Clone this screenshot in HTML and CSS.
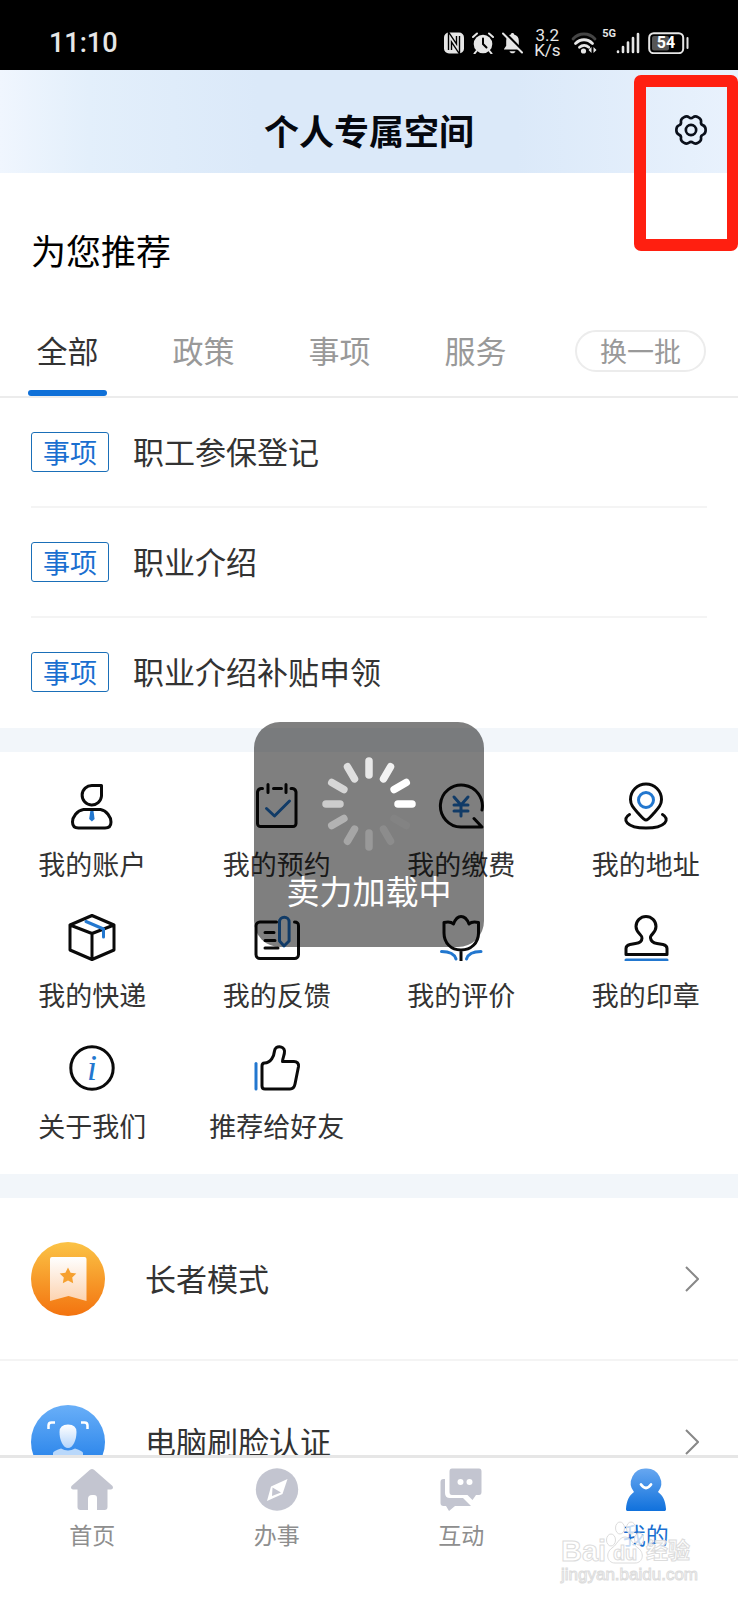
FILE: index.html
```html
<!DOCTYPE html>
<html lang="zh-CN">
<head>
<meta charset="utf-8">
<meta name="viewport" content="width=device-width, initial-scale=1">
<title>个人专属空间</title>
<link rel="stylesheet" href="styles.css">
</head>
<body>
<div class="app">
  <div class="status">
    <span class="status-time">11:10</span>
    <div class="status-icons">
      <svg width="20" height="22" viewBox="0 0 20 22"><rect width="20" height="21" y=".5" rx="5" fill="#e6e6e6"/><path d="M6 18V5l8 12V4" fill="none" stroke="#000" stroke-width="4.4"/><path d="M6 18V5l8 12V4" fill="none" stroke="#e6e6e6" stroke-width="1.6"/></svg>
      <svg width="22" height="22" viewBox="0 0 22 22"><circle cx="11" cy="12" r="9.3" fill="#e6e6e6"/><path d="M1 5l4-3.500M21 5l-4-3.500M4.500 19l-2 2.500M17.500 19l2 2.500" stroke="#e6e6e6" stroke-width="2" stroke-linecap="round"/><path d="M11 6.500V12l3.500 3.500" fill="none" stroke="#000" stroke-width="2" stroke-linecap="round"/></svg>
      <svg width="21" height="22" viewBox="0 0 21 22"><path d="M10.500 1c1 0 1.600.6 1.600 1.500 3.200.8 4.700 3.200 4.700 6.300v5l2 3.200v.6H2v-.6l2.200-3.200v-5c0-3.100 1.500-5.500 4.700-6.300 0-.9.6-1.500 1.600-1.500z" fill="#e6e6e6"/><path d="M7.500 19.300h6c-.8 2.700-5.200 2.700-6 0z" fill="#e6e6e6"/><path d="M2 0l19 19.500" stroke="#000" stroke-width="3"/><path d="M1 1.500l19 19" stroke="#e6e6e6" stroke-width="2" stroke-linecap="round"/></svg>
      <span class="status-speed">3.2<br>K/s</span>
      <svg class="status-wifi" width="27" height="22" viewBox="0 0 27 22" fill="none" stroke-width="2.800" stroke-linecap="round"><path d="M2 7c6-6.700 16-6.700 22 0" stroke="#444"/><path d="M4.500 11.500c5-5 12-5 17 0M8.500 15.300c2.800-2.500 6.500-2.500 9.300 0" stroke="#e6e6e6"/><circle cx="12.500" cy="19" r="2.600" fill="#e6e6e6"/><path d="M20.500 15v6l-3-3zM22.500 15v6l3-3z" fill="#e6e6e6"/></svg>
      <span class="status-net">5G</span>
      <svg class="status-signal" width="24" height="22" viewBox="0 0 24 22" stroke="#e6e6e6" stroke-width="2.600" stroke-linecap="round"><path d="M2 19.500v.5M7 15v5M12 10.500V20M17 6v14M22 2v18"/></svg>
      <svg width="41" height="22" viewBox="0 0 41 22"><rect x="1.200" y="1.200" width="34" height="20" rx="4.500" fill="none" stroke="#e6e6e6" stroke-width="2"/><rect x="4" y="4" width="17" height="14.500" rx="2" fill="#555"/><path d="M39.500 6v10" stroke="#e6e6e6" stroke-width="2" stroke-linecap="round"/><text x="18" y="16.300" text-anchor="middle" class="battery-text">54</text></svg>
    </div>
  </div>

  <header class="header">
    <h1 class="header-title">个人专属空间</h1>
    <button class="settings" type="button" aria-label="设置">
      <svg width="32" height="32" viewBox="-18 -18 36 36" fill="none" stroke="#0b101b" stroke-width="3"><path d="M16.500 0Q16.500 4.100 13.600 5.200Q10.800 6.200 11.300 9.200Q11.800 12.200 8.200 14.200Q4.700 16.300 2.400 14.400Q0 12.500-2.400 14.400Q-4.700 16.300-8.200 14.200Q-11.800 12.200-11.300 9.200Q-10.800 6.200-13.600 5.200Q-16.500 4.100-16.500 0Q-16.500-4.100-13.600-5.200Q-10.800-6.200-11.300-9.200Q-11.800-12.200-8.200-14.200Q-4.700-16.300-2.400-14.400Q0-12.500 2.400-14.400Q4.700-16.300 8.200-14.200Q11.800-12.200 11.300-9.200Q10.800-6.200 13.600-5.200Q16.500-4.100 16.500 0z"/><circle r="5.800"/></svg>
    </button>
  </header>

  <main class="content">
    <section class="recommend">
      <h2 class="recommend-title">为您推荐</h2>
      <div class="tabs">
        <button class="tab tab-active" type="button">全部</button>
        <button class="tab" type="button">政策</button>
        <button class="tab" type="button">事项</button>
        <button class="tab" type="button">服务</button>
        <button class="refresh" type="button">换一批</button>
      </div>
      <ul class="items">
        <li class="item"><span class="tag">事项</span><a class="item-link" href="#">职工参保登记</a></li>
        <li class="item"><span class="tag">事项</span><a class="item-link" href="#">职业介绍</a></li>
        <li class="item"><span class="tag">事项</span><a class="item-link" href="#">职业介绍补贴申领</a></li>
      </ul>
    </section>

    <nav class="grid" aria-label="我的服务">
      <a class="cell" href="#"><svg class="line-icon" viewBox="0 0 48 48"><path d="M24 3.500h9.500V14a9.700 9.700 0 1 1-9.500-10.500z"/><path d="M15.500 27.500h17c6 1 10.500 7.500 10.500 12.500 0 4-2 6-6 6H10.500c-4 0-6-2-6-6 0-5 4.500-11.500 11-12.500z"/><path class="solid" d="M22.300 29h3.200l1.100 8-2.700 2.500-2.700-2.500z"/></svg>我的账户</a>
      <a class="cell" href="#"><svg class="line-icon" viewBox="0 0 48 48"><path d="M9.500 6.500H8A4 4 0 0 0 4.500 10v31.500a3 3 0 0 0 3 3h32.500a3 3 0 0 0 3-3V10a4 4 0 0 0-3.500-3.500H38M20.500 6.500h8M15 2.500v8M33 2.500v8"/><path class="accent" d="M13.500 26.500l8 7.500L36.500 19"/></svg>我的预约</a>
      <a class="cell" href="#"><svg class="line-icon" viewBox="0 0 48 48"><path d="M45 28A21 21 0 1 0 24 45h21l-8-8.500"/><path class="accent" d="M17 15l7 8 7-8M24 23v11M17 23h14M17 29h14"/></svg>我的缴费</a>
      <a class="cell" href="#"><svg class="line-icon" viewBox="0 0 48 48"><path d="M24 38c-2 0-4-2.500-8-7-4.500-5-7.500-8-7.500-13.500a15.500 15.500 0 0 1 31 0c0 5.500-3 8.500-7.500 13.500-4 4.500-6 7-8 7z"/><path d="M7.500 32.500C-.5 37 4 46 24 46s24.500-9 16.500-13.500"/><circle class="accent" cx="24" cy="18" r="7.500"/></svg>我的地址</a>
      <a class="cell" href="#"><svg class="line-icon" viewBox="0 0 48 48"><path d="M24 2.500L46 12v25L24 46.500 2 37V12zM2 12l22 8.500L46 12M24 20.500v26"/><path class="accent" d="M18 8.500l17.500 7.500v8"/></svg>我的快递</a>
      <a class="cell" href="#"><svg class="line-icon" viewBox="0 0 48 48"><path d="M23.500 9H7a4 4 0 0 0-4 4v28.500a4 4 0 0 0 4 4h34.500a4 4 0 0 0 4-4V13c0-3-1-4-4-4M12 19.500h9M12 27.500h10M12 35h13"/><path class="accent" d="M26.500 9a4.800 4.800 0 0 1 9.600 0v19L31 33l-4.500-5z"/></svg>我的反馈</a>
      <a class="cell" href="#"><svg class="line-icon" viewBox="0 0 48 48"><path d="M7 9.500c4-1 7.500-.5 9.500 1.500C18 7 20.500 3.500 24 3.500S30.500 7 32 11c2-2 5.500-2.500 9.500-1.500V20c0 10-7.500 17-17.500 17S7 30 7 20zM24 37v11"/><path class="accent" d="M4.500 38.500c9 0 13 2.500 14.500 7.500M44 38.500c-9 0-13 2.500-14.500 7.500"/></svg>我的评价</a>
      <a class="cell" href="#"><svg class="line-icon" viewBox="0 0 48 48"><path d="M20 25c.5-3-6-5-6-11.500a10 10 0 0 1 20 0C34 20 27.500 22 28.500 25c.5 4 3 5 6.500 5.500l6 1c2.500.5 4 2 4 4V41.500H4V35.500c0-2 1.500-3.500 4-4l5.500-1c4-.5 6.500-1.500 6.500-5.500z"/><path class="accent" d="M4 47h41"/></svg>我的印章</a>
      <a class="cell" href="#"><svg class="line-icon" viewBox="0 0 48 48"><circle cx="24" cy="24" r="21.200"/><text class="info-letter" x="24" y="36" text-anchor="middle">i</text></svg>关于我们</a>
      <a class="cell" href="#"><svg class="line-icon" viewBox="0 0 48 48"><path d="M9 22c0-2 .5-3 2.500-3C18 19 21 12 21.500 7c.5-6 9.500-5.500 10 0 .3 4-2 7-2 10.500H41c3 0 5 2 4.500 5L42 40c-.7 3.500-2 5-5 5H12c-2 0-3-1-3-3z"/><path class="accent" d="M3 19.500v25.500"/></svg>推荐给好友</a>
    </nav>

    <ul class="modes">
      <li><a class="mode" href="#">
        <svg width="74" height="74" viewBox="0 0 74 74"><defs><linearGradient id="orange" x2="0" y2="1"><stop stop-color="#fbc346"/><stop offset="1" stop-color="#f3730f"/></linearGradient><linearGradient id="cream" x2="0" y2="1"><stop stop-color="#fff"/><stop offset="1" stop-color="#fcd3b0"/></linearGradient></defs><circle cx="37" cy="37" r="37" fill="url(#orange)"/><path d="M19 17q0-2 2-2h32.500q2 0 2 2v42L37.500 54 19 59z" fill="url(#cream)"/><path d="M37 25.500l2.600 5.200 5.700.8-4.100 4 1 5.700-5.200-2.700-5.200 2.700 1-5.700-4.100-4 5.700-.8z" fill="#f6a02e"/></svg>
        <span class="mode-name">长者模式</span>
        <svg class="chevron" viewBox="0 0 14 26"><path d="M1 1l12 12L1 25"/></svg>
      </a></li>
      <li><a class="mode" href="#">
        <svg width="74" height="74" viewBox="0 0 74 74"><defs><linearGradient id="sky" x2="0" y2="1"><stop stop-color="#69aff8"/><stop offset="1" stop-color="#1677e6"/></linearGradient><linearGradient id="face" x2="0" y2="1"><stop stop-color="#fff"/><stop offset="1" stop-color="#b5d5fb"/></linearGradient></defs><circle cx="37" cy="37" r="37" fill="url(#sky)"/><path d="M17.500 24v-3.500q0-3 3-3h3.500M50 17.500h3.500q3 0 3 3V24" fill="none" stroke="#fff" stroke-width="2.500"/><path d="M22 56V48q0-2 8-4.500 7 4 14 0 8 2.500 8 4.500V56z" fill="#b9d8fb"/><path d="M28.500 27q0-7.500 8.500-7.500t8.500 7.500c0 8-3.500 16-8.500 16s-8.500-8-8.500-16z" fill="url(#face)"/></svg>
        <span class="mode-name">电脑刷脸认证</span>
        <svg class="chevron" viewBox="0 0 14 26"><path d="M1 1l12 12L1 25"/></svg>
      </a></li>
    </ul>
  </main>

  <nav class="tabbar" aria-label="主导航">
    <a class="tabbar-item" href="#"><svg width="44" height="44" viewBox="0 0 44 44" fill="#c3c5d0"><path d="M20 1.800q2-1.600 4 0L42.500 18q1.500 2.500-1.500 3.500h-3.500V39q0 3-3 3H27V30q0-3-3-3h-2q-4 0-4 4v11h-7.500q-3 0-3-3V21.500H3q-3-1-1.500-3.500z"/></svg>首页</a>
    <a class="tabbar-item" href="#"><svg width="44" height="44" viewBox="0 0 44 44"><circle cx="22" cy="21.500" r="21.200" fill="#c3c5d0"/><path d="M32.500 11L16 18.500l-4 14.500L27.500 26z" fill="#fff"/><path d="M17.500 19.500l8.500 5-9 3.500z" fill="#c3c5d0"/></svg>办事</a>
    <a class="tabbar-item" href="#"><svg width="44" height="44" viewBox="0 0 44 44"><path d="M1.500 14q0-3 3-3h1.500v14q0 5 5 5h13l8 8H16l-6 5-3-5H4.500q-3 0-3-3z" fill="#c3c5d0"/><path d="M13 .500h27q2.500 0 2.500 3V24q0 3-2.500 3h-3l-3.500 5-5-5H13q-2.500 0-2.500-3V3.500q0-3 2.500-3z" fill="#c3c5d0"/><circle cx="21.500" cy="14" r="3" fill="#fff"/><circle cx="30.500" cy="14" r="3" fill="#fff"/></svg>互动</a>
    <a class="tabbar-item tabbar-active" href="#"><svg width="44" height="44" viewBox="0 0 44 44"><defs><linearGradient id="me" x2="0" y2="1"><stop stop-color="#67a7f0"/><stop offset="1" stop-color="#1071dc"/></linearGradient></defs><path d="M22 .500a14.500 14.500 0 0 1 12 23.500c5 3.500 7.500 9 8 17 0 1.500-.5 2-2 2H4c-1.500 0-2-.5-2-2 .5-8 3-13.500 8-17A14.500 14.500 0 0 1 22 .500z" fill="url(#me)"/><path d="M17 16.500q5 7 10 0" fill="none" stroke="#fff" stroke-width="2.800" stroke-linecap="round"/></svg>我的</a>
  </nav>

  <div class="loading" role="status">
    <svg width="94" height="94" viewBox="-47 -47 94 94" stroke="#fff" stroke-width="7.500" stroke-linecap="round">
      <path d="M29 0h14"/>
      <path d="M29 0h14" transform="rotate(-30)"/>
      <path d="M29 0h14" transform="rotate(-60)" opacity=".9"/>
      <path d="M29 0h14" transform="rotate(-90)" opacity=".82"/>
      <path d="M29 0h14" transform="rotate(-120)" opacity=".75"/>
      <path d="M29 0h14" transform="rotate(-150)" opacity=".68"/>
      <path d="M29 0h14" transform="rotate(180)" opacity=".6"/>
      <path d="M29 0h14" transform="rotate(150)" opacity=".4"/>
      <path d="M29 0h14" transform="rotate(120)" opacity=".3"/>
      <path d="M29 0h14" transform="rotate(90)" opacity=".2"/>
      <path d="M29 0h14" transform="rotate(60)" opacity=".1"/>
      <path d="M29 0h14" transform="rotate(30)" opacity=".03"/>
    </svg>
    <span>卖力加载中</span>
  </div>

  <div class="highlight"></div>

  <div class="watermark">
    <div class="watermark-brand">
      <span>Bai</span>
      <span class="watermark-paw"><svg width="38" height="44" viewBox="0 0 38 44" fill="#fff" fill-opacity=".75" stroke="#dcdcdc"><ellipse cx="5" cy="19" rx="4.500" ry="6"/><ellipse cx="14" cy="7" rx="4.500" ry="6"/><ellipse cx="25" cy="7" rx="4.500" ry="6"/><ellipse cx="33" cy="18" rx="4.500" ry="6"/><path d="M19 16c6 0 8 8 13 11 7 5 5 15-3 15H9C1 42-1 32 6 27c5-3 7-11 13-11z"/></svg><b>du</b></span>
      <span class="watermark-cn">经验</span>
    </div>
    <div class="watermark-url">jingyan.baidu.com</div>
  </div>
</div>
</body>
</html>
```
FILE: styles.css
```css
* { box-sizing: border-box; }

body {
  margin: 0;
  background: #fff;
  color: #333;
  font-family: "Noto Sans CJK SC", sans-serif;
}

h1, h2, ul { margin: 0; padding: 0; }
ul { list-style: none; }
a { color: inherit; text-decoration: none; }
svg { display: block; flex: none; }

button {
  padding: 0;
  border: 0;
  background: none;
  color: inherit;
  font: inherit;
}

.app {
  position: relative;
  display: flex;
  flex-direction: column;
  height: 100vh;
  overflow: hidden;
}

/* Status bar */
.status {
  display: flex;
  flex: none;
  align-items: center;
  justify-content: space-between;
  height: 70px;
  padding: 15px 49px 0;
  background: #000;
  color: #e6e6e6;
  font-family: Roboto, sans-serif;
}

.status-time { font-size: 27px; font-weight: 500; line-height: 32px; }
.status-icons { display: flex; align-items: center; gap: 8px; }

.status-speed {
  width: 26px;
  margin: 0 3px;
  font-size: 17px;
  line-height: 15px;
  text-align: center;
  white-space: nowrap;
}

.status-wifi { margin-right: -4px; }
.status-net { align-self: flex-start; font-size: 11px; font-weight: 700; line-height: 12px; }
.status-signal { margin-left: -8px; }
.battery-text { fill: #fff; font-size: 16px; font-weight: 700; }

/* Page header */
.header {
  display: grid;
  flex: none;
  grid-template-columns: 1fr auto 1fr;
  align-items: center;
  height: 103px;
  padding: 16px 31px 0;
  background: linear-gradient(90deg, #f0f6fe 0, #e3effb 12%, #dbe9f9 35%, #dbe9f9 70%, #e9f2fd 100%);
}

.header-title {
  grid-column: 2;
  color: #05080f;
  font-size: 35px;
  font-weight: 700;
  line-height: 48px;
}

.settings { justify-self: end; }

.content { flex: 1; min-height: 0; overflow: hidden; }

/* Recommendations */
.recommend { border-bottom: 24px solid #f2f6fa; }

.recommend-title {
  padding: 53px 31px 0;
  color: #000;
  font-size: 35px;
  font-weight: 400;
  line-height: 48px;
}

.tabs {
  display: flex;
  align-items: flex-start;
  gap: 57px;
  padding: 56px 32px 0 28px;
  border-bottom: 2px solid #ececec;
}

.tab {
  width: 79px;
  color: #999;
  font-size: 31px;
  line-height: 40px;
}

.tab::after {
  display: block;
  height: 6px;
  margin-top: 20px;
  border-radius: 3px;
  content: "";
}

.tab-active { color: #333; }
.tab-active::after { background: #0f70d8; }

.refresh {
  width: 131px;
  margin-left: auto;
  border: 2px solid #ececec;
  border-radius: 21px;
  color: #999;
  font-size: 27px;
  line-height: 38px;
}

.items { padding: 0 31px; }

.item {
  display: flex;
  align-items: center;
  gap: 24px;
  height: 110px;
  border-bottom: 2px solid #f4f4f4;
}

.item:last-child { border-bottom-color: #fff; }

.tag {
  padding: 0 11px 1px;
  border: 1px solid #1a6fb8;
  border-radius: 3px;
  color: #1a6fd0;
  font-size: 27px;
  line-height: 37px;
}

.item-link, .mode-name {
  padding-bottom: 2px;
  font-size: 31px;
  line-height: 44px;
}

/* Service grid */
.grid {
  display: grid;
  grid-template-columns: repeat(4, 1fr);
  gap: 34px 0;
  padding: 30px 0 33px;
  border-bottom: 24px solid #f2f6fa;
}

.cell {
  display: flex;
  flex-direction: column;
  align-items: center;
  gap: 19px;
  font-size: 27px;
  line-height: 30px;
  white-space: nowrap;
}

.line-icon {
  width: 48px;
  height: 48px;
  fill: none;
  stroke: #0a0a0a;
  stroke-width: 3;
  stroke-linecap: round;
  stroke-linejoin: round;
}

.line-icon .accent { stroke: #2277cf; }
.line-icon .solid { fill: #2277cf; stroke: none; }

.line-icon .info-letter {
  fill: #2277cf;
  stroke: none;
  font-family: "Liberation Serif", serif;
  font-size: 36px;
  font-style: italic;
}

/* Mode rows */
.mode {
  display: flex;
  align-items: center;
  height: 163px;
  padding: 0 39px 0 31px;
  border-bottom: 2px solid #f4f4f4;
}

.mode-name { flex: 1; padding-left: 40px; }

.chevron {
  width: 14px;
  height: 26px;
  fill: none;
  stroke: #888;
  stroke-width: 2;
}

/* Bottom navigation */
.tabbar {
  display: grid;
  flex: none;
  grid-template-columns: repeat(4, 1fr);
  height: 145px;
  padding-top: 10px;
  border-top: 3px solid #e6e6e6;
  background: #fff;
}

.tabbar-item {
  display: flex;
  flex-direction: column;
  align-items: center;
  gap: 7px;
  color: #8e8e8e;
  font-size: 23px;
  line-height: 30px;
}

.tabbar-active { color: #1a6fd0; }

/* Loading toast */
.loading {
  position: absolute;
  top: 722px;
  left: 50%;
  display: flex;
  flex-direction: column;
  align-items: center;
  gap: 17px;
  width: 230px;
  height: 225px;
  margin-left: -115px;
  padding-top: 35px;
  border-radius: 26px;
  background: rgba(0, 0, 0, 0.5);
  color: #fff;
  font-size: 33px;
  line-height: 44px;
}

/* Marker round the settings button */
.highlight {
  position: absolute;
  top: 75px;
  right: 0;
  width: 104px;
  height: 176px;
  border: 12px solid #ff1f10;
  border-right-width: 11px;
  border-radius: 7px;
  pointer-events: none;
}

/* Watermark */
.watermark {
  position: absolute;
  right: 40px;
  bottom: 15px;
  color: rgba(255, 255, 255, 0.8);
  font-family: "Liberation Sans", "Noto Sans CJK SC", sans-serif;
  -webkit-text-stroke: 1px #dcdcdc;
  pointer-events: none;
}

.watermark-brand {
  display: flex;
  align-items: flex-end;
  font-size: 29px;
  font-weight: 700;
  line-height: 28px;
}

.watermark-paw { display: grid; place-items: end center; }
.watermark-paw > * { grid-area: 1 / 1; }
.watermark-paw b { font-size: 20px; line-height: 24px; }
.watermark-cn { padding-left: 2px; font-size: 22px; }
.watermark-url { color: #fff; font-size: 17px; line-height: 20px; }
```
